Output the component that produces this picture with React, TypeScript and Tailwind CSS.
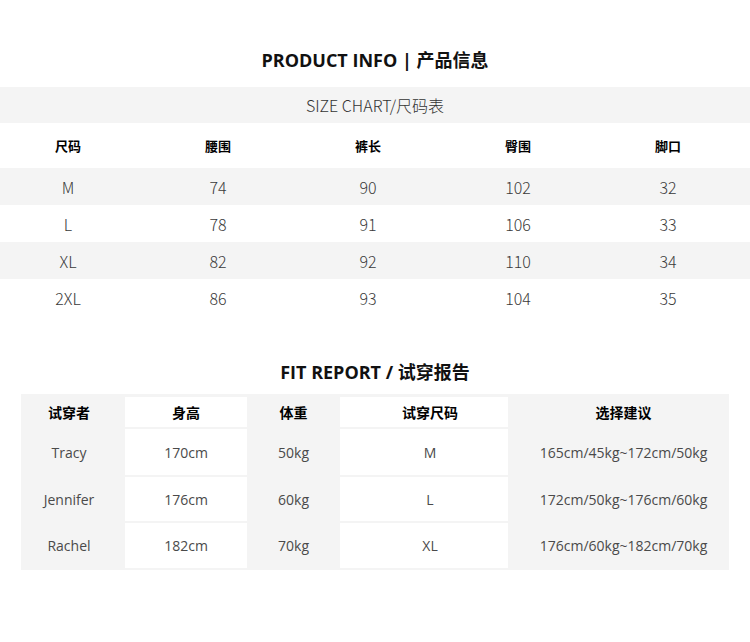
const sizeHeaders = ['尺码', '腰围', '裤长', '臀围', '脚口'];

const sizeRows = [
  ['M', '74', '90', '102', '32'],
  ['L', '78', '91', '106', '33'],
  ['XL', '82', '92', '110', '34'],
  ['2XL', '86', '93', '104', '35'],
];

const fitHeaders = ['试穿者', '身高', '体重', '试穿尺码', '选择建议'];

const fitRows = [
  ['Tracy', '170cm', '50kg', 'M', '165cm/45kg~172cm/50kg'],
  ['Jennifer', '176cm', '60kg', 'L', '172cm/50kg~176cm/60kg'],
  ['Rachel', '182cm', '70kg', 'XL', '176cm/60kg~182cm/70kg'],
];

// white cells sit on the gray table background in columns 2 and 4
const isWhiteCol = (i: number) => i === 1 || i === 3;

// small nudges so the text sits where the original puts it
const colNudge = ['pr-[8px]', '', '', 'pl-[12px]', 'pl-[10px]'];

export default function App() {
  return (
    <div className="w-[750px] min-h-[642px] bg-white font-['Open_Sans','Noto_Sans_CJK_SC',sans-serif] text-[#111]">
      {/* Product info */}
      <h1 className="pt-[48px] text-center text-[18px] font-bold leading-[24px]">
        PRODUCT INFO | 产品信息
      </h1>

      <div className="mt-[15px] flex h-[36px] items-center justify-center bg-[#f4f4f4] font-['Noto_Sans_CJK_SC',sans-serif] text-[16px] font-light text-[#333]">
        SIZE CHART/尺码表
      </div>

      <div className="grid h-[45px] grid-cols-5 items-center">
        {sizeHeaders.map((h) => (
          <div
            key={h}
            className="pr-[14px] text-center font-['Noto_Sans_CJK_SC',sans-serif] text-[13px] font-bold text-black"
          >
            {h}
          </div>
        ))}
      </div>

      {sizeRows.map((row, r) => (
        <div
          key={row[0]}
          className={`grid h-[37px] grid-cols-5 items-center ${
            r % 2 === 0 ? 'bg-[#f4f4f4]' : 'bg-white'
          }`}
        >
          {row.map((v, i) => (
            <div
              key={i}
              className="pr-[14px] text-center font-['Noto_Sans_CJK_SC',sans-serif] text-[16px] font-light text-[#3a3a3a]"
            >
              {v}
            </div>
          ))}
        </div>
      ))}

      {/* Fit report */}
      <h2 className="mt-[44px] text-center text-[18px] font-bold leading-[24px]">
        FIT REPORT / 试穿报告
      </h2>

      <div className="mx-[21px] mt-[10px] grid grid-cols-[104px_122px_93px_168px_1fr] gap-y-[2px] bg-[#f4f4f4] pt-[3px] pb-[2px]">
        {fitHeaders.map((h, i) => (
          <div
            key={h}
            className={`flex h-[30px] items-center justify-center font-['Noto_Sans_CJK_SC',sans-serif] text-[14px] font-bold text-black ${
              colNudge[i]
            } ${isWhiteCol(i) ? 'bg-white' : ''}`}
          >
            {h}
          </div>
        ))}
        {fitRows.map((row, r) =>
          row.map((v, i) => (
            <div
              key={`${r}-${i}`}
              className={`flex items-center justify-center text-[14px] text-[#4a4a4a] ${
                colNudge[i]
              } ${r === 0 ? 'h-[46px]' : r === 1 ? 'h-[44px]' : 'h-[45px]'} ${
                isWhiteCol(i) ? 'bg-white' : ''
              }`}
            >
              {v}
            </div>
          )),
        )}
      </div>
    </div>
  );
}
